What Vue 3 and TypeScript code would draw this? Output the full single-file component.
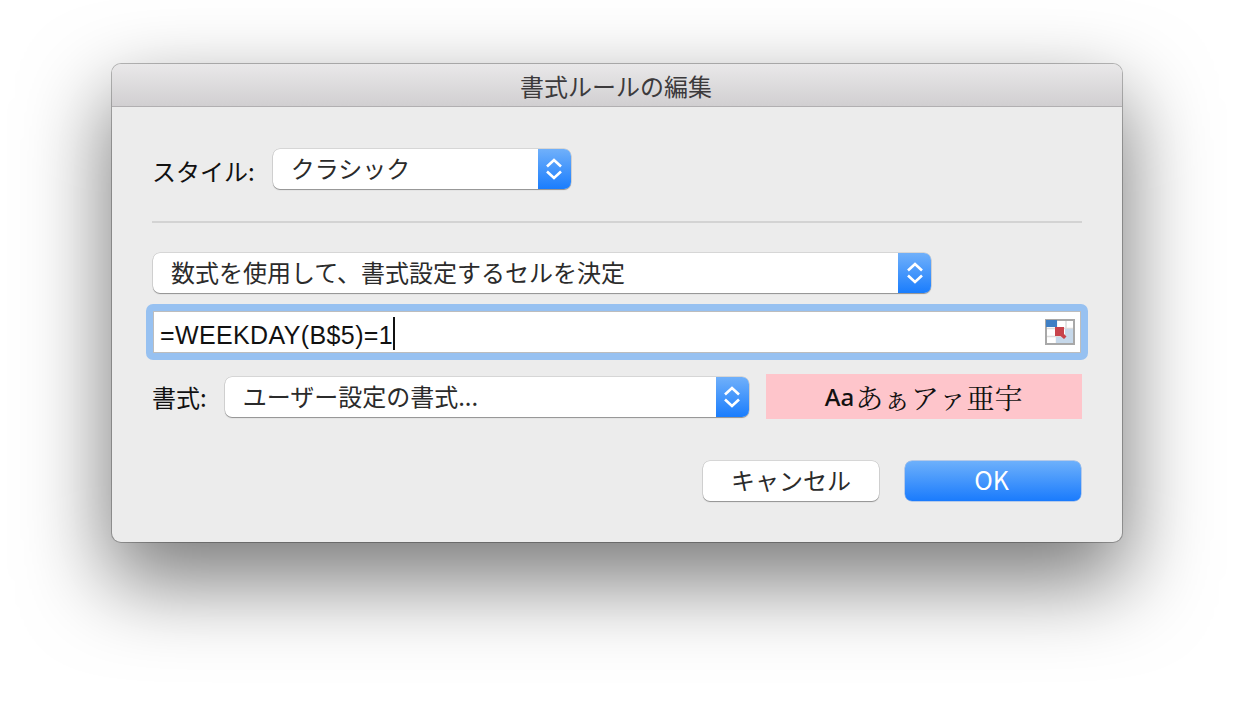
<script setup lang="ts">
const ui = {
  title: '書式ルールの編集',
  styleLabel: 'スタイル:',
  styleValue: 'クラシック',
  rule: '数式を使用して、書式設定するセルを決定',
  formula: '=WEEKDAY(B$5)=1',
  formatLabel: '書式:',
  formatValue: 'ユーザー設定の書式...',
  cancel: 'キャンセル',
  ok: 'OK',
}
</script>

<template>
  <div class="page">
    <div class="dialog">
      <header class="titlebar">{{ ui.title }}</header>
      <main class="body">
        <div class="row style-row">
          <span class="label">{{ ui.styleLabel }}</span>
          <div class="select style-select">
            <span class="value">{{ ui.styleValue }}</span>
            <span class="stepper">
              <svg width="20" height="28" viewBox="0 0 20 28" fill="none" stroke="#fff" stroke-width="2.6">
                <path d="M3 11.5 L10 5 L17 11.5" />
                <path d="M3 16.5 L10 23 L17 16.5" />
              </svg>
            </span>
          </div>
        </div>
        <div class="divider"></div>
        <div class="select rule-select">
          <span class="value">{{ ui.rule }}</span>
          <span class="stepper">
            <svg width="20" height="28" viewBox="0 0 20 28" fill="none" stroke="#fff" stroke-width="2.6">
              <path d="M3 11.5 L10 5 L17 11.5" />
              <path d="M3 16.5 L10 23 L17 16.5" />
            </svg>
          </span>
        </div>
        <div class="formula">
          <span class="formula-text">{{ ui.formula }}</span><span class="caret"></span>
          <svg class="range-icon" width="30" height="26" viewBox="0 0 30 26">
            <rect x="1" y="1" width="28" height="24" fill="#fff" stroke="#a8a8a8" stroke-width="2" />
            <path d="M2 9.5H28M2 17.5H28M11.5 2V24M21 2V24" stroke="#dcdcdc" stroke-width="1.5" />
            <rect x="1" y="1" width="11" height="7" fill="#3f7fc4" />
            <rect x="11" y="18" width="17" height="6" fill="#c6d8ea" />
            <rect x="20" y="10" width="8" height="8" fill="#c6d8ea" />
            <path d="M10 8 H19 V15 L21.5 17.5 L19 20 L15.5 17 H10 Z" fill="#c8444c" />
          </svg>
        </div>
        <div class="row format-row">
          <span class="label">{{ ui.formatLabel }}</span>
          <div class="select format-select">
            <span class="value">{{ ui.formatValue }}</span>
            <span class="stepper">
              <svg width="20" height="28" viewBox="0 0 20 28" fill="none" stroke="#fff" stroke-width="2.6">
                <path d="M3 11.5 L10 5 L17 11.5" />
                <path d="M3 16.5 L10 23 L17 16.5" />
              </svg>
            </span>
          </div>
          <div class="preview"><span class="aa">Aa</span><span class="kana">あぁアァ亜宇</span></div>
        </div>
        <div class="actions">
          <button class="btn cancel">{{ ui.cancel }}</button>
          <button class="btn ok">{{ ui.ok }}</button>
        </div>
      </main>
    </div>
  </div>
</template>

<style>
html, body { margin: 0; background: #fff; }
</style>

<style scoped>
.page {
  width: 1234px;
  height: 702px;
  padding: 64px 0 0 112px;
  box-sizing: border-box;
  overflow: hidden;
  font-family: "Noto Sans CJK JP", "Liberation Sans", sans-serif;
}
.dialog {
  width: 1010px;
  height: 478px;
  box-sizing: border-box;
  background: #ececec;
  border-radius: 9px;
  box-shadow: 0 0 0 1px rgba(0, 0, 0, 0.26), 0 36px 84px 4px rgba(0, 0, 0, 0.52);
  overflow: hidden;
  display: flex;
  flex-direction: column;
}
.titlebar {
  height: 43px;
  flex: none;
  box-sizing: border-box;
  background: linear-gradient(#e9e8e9, #d1cfd1);
  border-bottom: 1px solid #b1afb1;
  text-align: center;
  font-size: 24px;
  line-height: 44px;
  padding-right: 2px;
  color: #3c3a3c;
}
.body {
  flex: 1;
  padding: 42px 40px 0;
  display: flex;
  flex-direction: column;
}
.row { display: flex; align-items: center; }
.label {
  font-size: 24px;
  line-height: 40px;
  color: #111;
  position: relative;
  top: 2px;
}
.style-row { gap: 18px; height: 40px; }
.select {
  height: 40px;
  box-sizing: border-box;
  background: #fff;
  border-radius: 7px;
  box-shadow: 0 0 0 0.5px rgba(0, 0, 0, 0.18), 0 1px 1px rgba(0, 0, 0, 0.32);
  display: flex;
  align-items: center;
  justify-content: space-between;
  overflow: hidden;
  flex: none;
}
.value {
  padding: 0 0 2px 18px;
  font-size: 24px;
  color: #2b2b2b;
  white-space: nowrap;
  line-height: 38px;
}
.stepper {
  width: 33px;
  height: 100%;
  background: linear-gradient(#70b0fa, #1a7dfd);
  display: flex;
  align-items: center;
  justify-content: center;
}
.style-select { width: 298px; }
.divider {
  height: 2px;
  background: #d3d3d3;
  margin: 32px 0 30px;
}
.rule-select { width: 778px; margin-left: 1px; }
.formula {
  margin: 11px -6px 0 -6px;
  height: 56px;
  box-sizing: border-box;
  width: 942px;
  border: 7px solid #97c1f1;
  border-radius: 7px;
  background: #fff;
  display: flex;
  align-items: center;
  padding-left: 7px;
  position: relative;
  box-shadow: inset 0 0 0 1px #bdbdbd;
}
.formula-text {
  font-family: "Liberation Sans", Arial, sans-serif;
  font-size: 25px;
  color: #111;
  line-height: 42px;
  letter-spacing: 0.38px;
  position: relative;
  top: 3px;
}
.caret {
  width: 2px;
  height: 33px;
  background: #111;
  margin-top: 2px;
}
.range-icon {
  position: absolute;
  right: 6px;
  top: 8px;
  filter: blur(0.5px);
}
.format-row {
  margin-top: 14px;
  height: 45px;
  gap: 17px;
}
.format-row .label { top: 0; }
.format-select { width: 524px; margin-left: 1px; }
.preview {
  width: 316px;
  height: 45px;
  background: #fec5cb;
  display: flex;
  align-items: center;
  justify-content: center;
  white-space: nowrap;
  color: #111;
}
.aa {
  font-family: "Noto Sans", sans-serif;
  font-size: 24px;
  font-weight: 500;
  margin-right: 1px;
}
.kana {
  font-family: "Noto Serif CJK JP", "Liberation Serif", "Noto Sans CJK JP", serif;
  font-size: 28px;
}
.actions {
  margin-top: 42px;
  display: flex;
  justify-content: flex-end;
  gap: 26px;
  padding-right: 1px;
}
.btn {
  width: 176px;
  height: 40px;
  padding: 0 0 3px;
  border: none;
  border-radius: 7px;
  font-family: inherit;
  font-size: 24px;
  line-height: 37px;
}
.cancel {
  background: #fff;
  color: #2b2b2b;
  box-shadow: 0 0 0 0.5px rgba(0, 0, 0, 0.18), 0 1px 1px rgba(0, 0, 0, 0.32);
}
.ok {
  background: linear-gradient(#6db0fb, #1a7bfd);
  color: #fff;
  font-size: 25px;
  padding-right: 3px;
  box-shadow: 0 0 0 0.5px rgba(20, 100, 220, 0.5);
}
</style>
